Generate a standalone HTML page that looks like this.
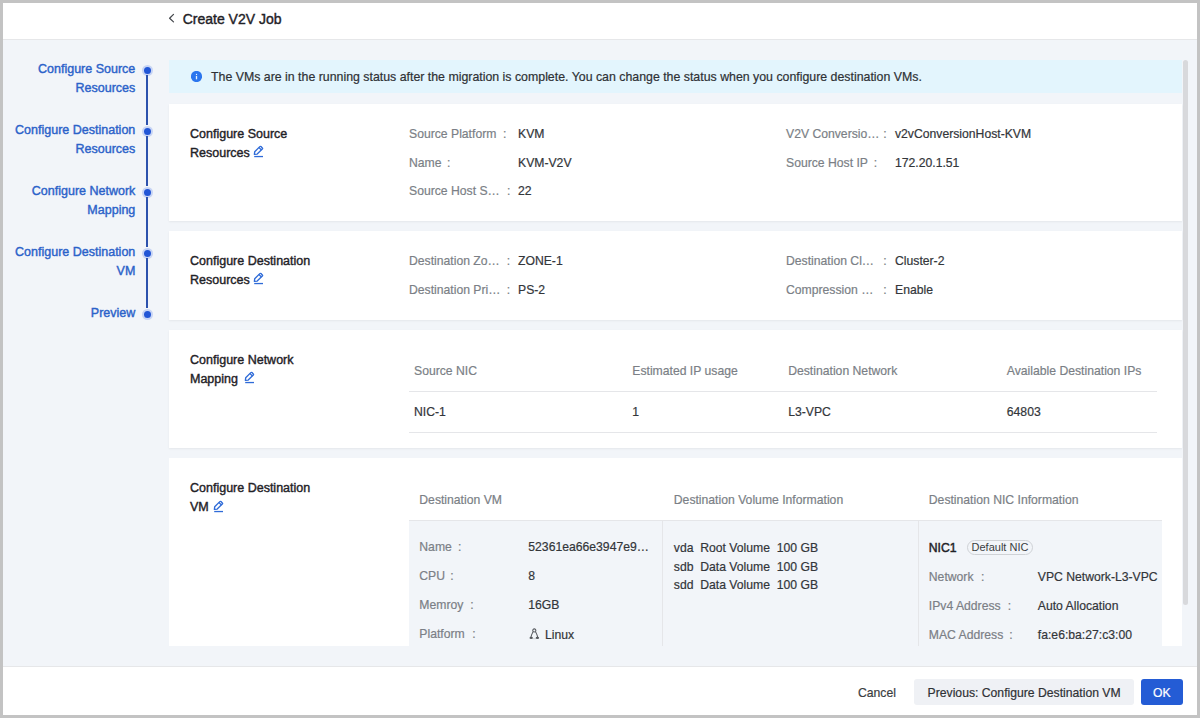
<!DOCTYPE html>
<html><head><meta charset="utf-8"><title>Create V2V Job</title>
<style>
*{box-sizing:border-box;margin:0;padding:0}
html,body{width:1200px;height:718px;overflow:hidden;background:#c3c3c3}
body{font-family:"Liberation Sans",sans-serif;position:relative}
.t{position:absolute;white-space:nowrap;-webkit-text-stroke:0.2px currentColor}
.r{position:absolute}
</style></head><body>
<div class="r" style="left:3px;top:3px;width:1194px;height:712px;background:#fff;"></div>
<div class="r" style="left:3px;top:40px;width:1194px;height:626px;background:#f2f5f9;"></div>
<div class="r" style="left:3px;top:39px;width:1194px;height:1px;background:#e6e7e9;"></div>
<div class="r" style="left:3px;top:666px;width:1194px;height:1px;background:#e6e7e9;"></div>
<svg class="r" style="left:166px;top:11px" width="12" height="14" viewBox="0 0 12 14"><path d="M7.5 3.4 L3.6 7.2 L7.5 10.9" fill="none" stroke="#45484d" stroke-width="1.25" stroke-linecap="round" stroke-linejoin="round"/></svg>
<div class="t" style="left:182.70px;top:10.65px;font-size:14px;line-height:16.8px;font-weight:400;color:#1f2227;-webkit-text-stroke:0.4px #1f2227">Create V2V Job</div>
<div class="t" style="right:1064.70px;text-align:right;top:62.17px;font-size:12.5px;line-height:15.0px;font-weight:400;color:#2b62c9;-webkit-text-stroke:0.4px #2b62c9">Configure Source</div>
<div class="t" style="right:1064.70px;text-align:right;top:81.07px;font-size:12.5px;line-height:15.0px;font-weight:400;color:#2b62c9;-webkit-text-stroke:0.4px #2b62c9">Resources</div>
<div class="r" style="left:141.75px;top:64.50px;width:11px;height:11px;border-radius:50%;background:#2256d6;border:2px solid rgba(255,255,255,0.75)"></div>
<div class="r" style="left:146px;top:75px;width:2px;height:50px;background:#2d52ad;"></div>
<div class="t" style="right:1064.70px;text-align:right;top:123.17px;font-size:12.5px;line-height:15.0px;font-weight:400;color:#2b62c9;-webkit-text-stroke:0.4px #2b62c9">Configure Destination</div>
<div class="t" style="right:1064.70px;text-align:right;top:142.07px;font-size:12.5px;line-height:15.0px;font-weight:400;color:#2b62c9;-webkit-text-stroke:0.4px #2b62c9">Resources</div>
<div class="r" style="left:141.75px;top:125.50px;width:11px;height:11px;border-radius:50%;background:#2256d6;border:2px solid rgba(255,255,255,0.75)"></div>
<div class="r" style="left:146px;top:136px;width:2px;height:50px;background:#2d52ad;"></div>
<div class="t" style="right:1064.70px;text-align:right;top:184.17px;font-size:12.5px;line-height:15.0px;font-weight:400;color:#2b62c9;-webkit-text-stroke:0.4px #2b62c9">Configure Network</div>
<div class="t" style="right:1064.70px;text-align:right;top:203.07px;font-size:12.5px;line-height:15.0px;font-weight:400;color:#2b62c9;-webkit-text-stroke:0.4px #2b62c9">Mapping</div>
<div class="r" style="left:141.75px;top:186.50px;width:11px;height:11px;border-radius:50%;background:#2256d6;border:2px solid rgba(255,255,255,0.75)"></div>
<div class="r" style="left:146px;top:197px;width:2px;height:50px;background:#2d52ad;"></div>
<div class="t" style="right:1064.70px;text-align:right;top:245.17px;font-size:12.5px;line-height:15.0px;font-weight:400;color:#2b62c9;-webkit-text-stroke:0.4px #2b62c9">Configure Destination</div>
<div class="t" style="right:1064.70px;text-align:right;top:264.07px;font-size:12.5px;line-height:15.0px;font-weight:400;color:#2b62c9;-webkit-text-stroke:0.4px #2b62c9">VM</div>
<div class="r" style="left:141.75px;top:247.50px;width:11px;height:11px;border-radius:50%;background:#2256d6;border:2px solid rgba(255,255,255,0.75)"></div>
<div class="r" style="left:146px;top:258px;width:2px;height:50px;background:#2d52ad;"></div>
<div class="t" style="right:1064.70px;text-align:right;top:306.17px;font-size:12.5px;line-height:15.0px;font-weight:400;color:#2b62c9;-webkit-text-stroke:0.4px #2b62c9">Preview</div>
<div class="r" style="left:141.75px;top:308.50px;width:11px;height:11px;border-radius:50%;background:#2256d6;border:2px solid rgba(255,255,255,0.75)"></div>
<div class="r" style="left:169px;top:60px;width:1013px;height:33px;background:#e3f5fd;"></div>
<svg class="r" style="left:190.9px;top:71.1px" width="11" height="11" viewBox="0 0 11 11"><circle cx="5.5" cy="5.5" r="5.6" fill="#2b76ee"/><rect x="4.85" y="4.9" width="1.3" height="3.4" fill="#e8f4ff"/><circle cx="5.5" cy="3.4" r="0.7" fill="#e8f4ff"/></svg>
<div class="t" style="left:211.00px;top:70.31px;font-size:12.35px;line-height:14.82px;font-weight:400;color:#2e3135;">The VMs are in the running status after the migration is complete. You can change the status when you configure destination VMs.</div>
<div class="r" style="left:1183px;top:60px;width:5px;height:545px;background:#d8d9dc;border-radius:3px"></div>
<div class="r" style="left:169px;top:104px;width:1013px;height:117px;background:#fff;box-shadow:0 1px 2px rgba(0,0,0,0.06)"></div>
<div class="t" style="left:190.00px;top:126.87px;font-size:12.5px;line-height:15.0px;font-weight:400;color:#1f2227;-webkit-text-stroke:0.4px #1f2227">Configure Source</div>
<div class="t" style="left:190.00px;top:145.57px;font-size:12.5px;line-height:15.0px;font-weight:400;color:#1f2227;-webkit-text-stroke:0.4px #1f2227">Resources</div>
<svg class="r" style="left:253px;top:145.3px" width="11" height="13" viewBox="0 0 11 13"><path d="M1.4 9.4 L1.7 6.8 L6.8 1.6 Q7.4 1.0 8.0 1.6 L9.3 2.9 Q9.9 3.5 9.3 4.1 L4.2 9.1 Z" fill="none" stroke="#2f6bd8" stroke-width="1.35" stroke-linejoin="round"/><path d="M5.9 2.5 L8.4 5.0" stroke="#2f6bd8" stroke-width="1.1"/><rect x="1.2" y="10.9" width="8.8" height="1.3" fill="#2f6bd8"/></svg>
<div class="t" style="left:409.00px;top:126.95px;font-size:12.2px;line-height:14.64px;font-weight:400;color:#7b7f86;">Source Platform</div>
<div class="t" style="left:503.00px;top:126.95px;font-size:12.2px;line-height:14.64px;font-weight:400;color:#7b7f86;">:</div>
<div class="t" style="left:518.00px;top:126.95px;font-size:12.2px;line-height:14.64px;font-weight:400;color:#33363a;">KVM</div>
<div class="t" style="left:409.00px;top:155.75px;font-size:12.2px;line-height:14.64px;font-weight:400;color:#7b7f86;">Name</div>
<div class="t" style="left:447.10px;top:155.75px;font-size:12.2px;line-height:14.64px;font-weight:400;color:#7b7f86;">:</div>
<div class="t" style="left:518.00px;top:155.75px;font-size:12.2px;line-height:14.64px;font-weight:400;color:#33363a;">KVM-V2V</div>
<div class="t" style="left:409.00px;top:184.45px;font-size:12.2px;line-height:14.64px;font-weight:400;color:#7b7f86;">Source Host S…</div>
<div class="t" style="left:506.90px;top:184.45px;font-size:12.2px;line-height:14.64px;font-weight:400;color:#7b7f86;">:</div>
<div class="t" style="left:518.00px;top:184.45px;font-size:12.2px;line-height:14.64px;font-weight:400;color:#33363a;">22</div>
<div class="t" style="left:786.00px;top:126.95px;font-size:12.2px;line-height:14.64px;font-weight:400;color:#7b7f86;">V2V Conversio…</div>
<div class="t" style="left:883.30px;top:126.95px;font-size:12.2px;line-height:14.64px;font-weight:400;color:#7b7f86;">:</div>
<div class="t" style="left:895.00px;top:126.95px;font-size:12.2px;line-height:14.64px;font-weight:400;color:#33363a;">v2vConversionHost-KVM</div>
<div class="t" style="left:786.00px;top:155.75px;font-size:12.2px;line-height:14.64px;font-weight:400;color:#7b7f86;">Source Host IP</div>
<div class="t" style="left:873.80px;top:155.75px;font-size:12.2px;line-height:14.64px;font-weight:400;color:#7b7f86;">:</div>
<div class="t" style="left:895.00px;top:155.75px;font-size:12.2px;line-height:14.64px;font-weight:400;color:#33363a;">172.20.1.51</div>
<div class="r" style="left:169px;top:231px;width:1013px;height:89px;background:#fff;box-shadow:0 1px 2px rgba(0,0,0,0.06)"></div>
<div class="t" style="left:190.00px;top:253.87px;font-size:12.5px;line-height:15.0px;font-weight:400;color:#1f2227;-webkit-text-stroke:0.4px #1f2227">Configure Destination</div>
<div class="t" style="left:190.00px;top:272.57px;font-size:12.5px;line-height:15.0px;font-weight:400;color:#1f2227;-webkit-text-stroke:0.4px #1f2227">Resources</div>
<svg class="r" style="left:253px;top:272.3px" width="11" height="13" viewBox="0 0 11 13"><path d="M1.4 9.4 L1.7 6.8 L6.8 1.6 Q7.4 1.0 8.0 1.6 L9.3 2.9 Q9.9 3.5 9.3 4.1 L4.2 9.1 Z" fill="none" stroke="#2f6bd8" stroke-width="1.35" stroke-linejoin="round"/><path d="M5.9 2.5 L8.4 5.0" stroke="#2f6bd8" stroke-width="1.1"/><rect x="1.2" y="10.9" width="8.8" height="1.3" fill="#2f6bd8"/></svg>
<div class="t" style="left:409.00px;top:254.25px;font-size:12.2px;line-height:14.64px;font-weight:400;color:#7b7f86;">Destination Zo…</div>
<div class="t" style="left:506.70px;top:254.25px;font-size:12.2px;line-height:14.64px;font-weight:400;color:#7b7f86;">:</div>
<div class="t" style="left:518.00px;top:254.25px;font-size:12.2px;line-height:14.64px;font-weight:400;color:#33363a;">ZONE-1</div>
<div class="t" style="left:409.00px;top:283.05px;font-size:12.2px;line-height:14.64px;font-weight:400;color:#7b7f86;">Destination Pri…</div>
<div class="t" style="left:506.70px;top:283.05px;font-size:12.2px;line-height:14.64px;font-weight:400;color:#7b7f86;">:</div>
<div class="t" style="left:518.00px;top:283.05px;font-size:12.2px;line-height:14.64px;font-weight:400;color:#33363a;">PS-2</div>
<div class="t" style="left:786.00px;top:254.25px;font-size:12.2px;line-height:14.64px;font-weight:400;color:#7b7f86;">Destination Cl…</div>
<div class="t" style="left:883.30px;top:254.25px;font-size:12.2px;line-height:14.64px;font-weight:400;color:#7b7f86;">:</div>
<div class="t" style="left:895.00px;top:254.25px;font-size:12.2px;line-height:14.64px;font-weight:400;color:#33363a;">Cluster-2</div>
<div class="t" style="left:786.00px;top:283.05px;font-size:12.2px;line-height:14.64px;font-weight:400;color:#7b7f86;">Compression …</div>
<div class="t" style="left:883.30px;top:283.05px;font-size:12.2px;line-height:14.64px;font-weight:400;color:#7b7f86;">:</div>
<div class="t" style="left:895.00px;top:283.05px;font-size:12.2px;line-height:14.64px;font-weight:400;color:#33363a;">Enable</div>
<div class="r" style="left:169px;top:330px;width:1013px;height:118px;background:#fff;box-shadow:0 1px 2px rgba(0,0,0,0.06)"></div>
<div class="t" style="left:190.00px;top:352.87px;font-size:12.5px;line-height:15.0px;font-weight:400;color:#1f2227;-webkit-text-stroke:0.4px #1f2227">Configure Network</div>
<div class="t" style="left:190.00px;top:371.57px;font-size:12.5px;line-height:15.0px;font-weight:400;color:#1f2227;-webkit-text-stroke:0.4px #1f2227">Mapping</div>
<svg class="r" style="left:243.6px;top:371.3px" width="11" height="13" viewBox="0 0 11 13"><path d="M1.4 9.4 L1.7 6.8 L6.8 1.6 Q7.4 1.0 8.0 1.6 L9.3 2.9 Q9.9 3.5 9.3 4.1 L4.2 9.1 Z" fill="none" stroke="#2f6bd8" stroke-width="1.35" stroke-linejoin="round"/><path d="M5.9 2.5 L8.4 5.0" stroke="#2f6bd8" stroke-width="1.1"/><rect x="1.2" y="10.9" width="8.8" height="1.3" fill="#2f6bd8"/></svg>
<div class="r" style="left:409px;top:391px;width:748px;height:1px;background:#e5e6e9;"></div>
<div class="r" style="left:409px;top:432px;width:748px;height:1px;background:#e5e6e9;"></div>
<div class="t" style="left:414.00px;top:363.95px;font-size:12.2px;line-height:14.64px;font-weight:400;color:#7b7f86;">Source NIC</div>
<div class="t" style="left:414.00px;top:405.45px;font-size:12.2px;line-height:14.64px;font-weight:400;color:#33363a;">NIC-1</div>
<div class="t" style="left:632.30px;top:363.95px;font-size:12.2px;line-height:14.64px;font-weight:400;color:#7b7f86;">Estimated IP usage</div>
<div class="t" style="left:632.30px;top:405.45px;font-size:12.2px;line-height:14.64px;font-weight:400;color:#33363a;">1</div>
<div class="t" style="left:788.20px;top:363.95px;font-size:12.2px;line-height:14.64px;font-weight:400;color:#7b7f86;">Destination Network</div>
<div class="t" style="left:788.20px;top:405.45px;font-size:12.2px;line-height:14.64px;font-weight:400;color:#33363a;">L3-VPC</div>
<div class="t" style="left:1006.80px;top:363.95px;font-size:12.2px;line-height:14.64px;font-weight:400;color:#7b7f86;">Available Destination IPs</div>
<div class="t" style="left:1006.80px;top:405.45px;font-size:12.2px;line-height:14.64px;font-weight:400;color:#33363a;">64803</div>
<div class="r" style="left:169px;top:458px;width:1013px;height:187.5px;overflow:hidden;background:#fff">
</div>
<div class="t" style="left:190.00px;top:480.87px;font-size:12.5px;line-height:15.0px;font-weight:400;color:#1f2227;-webkit-text-stroke:0.4px #1f2227">Configure Destination</div>
<div class="t" style="left:190.00px;top:499.57px;font-size:12.5px;line-height:15.0px;font-weight:400;color:#1f2227;-webkit-text-stroke:0.4px #1f2227">VM</div>
<svg class="r" style="left:213px;top:499.5px" width="11" height="13" viewBox="0 0 11 13"><path d="M1.4 9.4 L1.7 6.8 L6.8 1.6 Q7.4 1.0 8.0 1.6 L9.3 2.9 Q9.9 3.5 9.3 4.1 L4.2 9.1 Z" fill="none" stroke="#2f6bd8" stroke-width="1.35" stroke-linejoin="round"/><path d="M5.9 2.5 L8.4 5.0" stroke="#2f6bd8" stroke-width="1.1"/><rect x="1.2" y="10.9" width="8.8" height="1.3" fill="#2f6bd8"/></svg>
<div class="r" style="left:409px;top:520px;width:753px;height:1px;background:#e5e6e9;"></div>
<div class="r" style="left:409px;top:521px;width:753px;height:124.5px;background:#f2f5f9;"></div>
<div class="r" style="left:662px;top:521px;width:1px;height:124.5px;background:#e5e6e9;"></div>
<div class="r" style="left:918px;top:521px;width:1px;height:124.5px;background:#e5e6e9;"></div>
<div class="t" style="left:419.30px;top:493.25px;font-size:12.2px;line-height:14.64px;font-weight:400;color:#7b7f86;">Destination VM</div>
<div class="t" style="left:673.80px;top:493.25px;font-size:12.2px;line-height:14.64px;font-weight:400;color:#7b7f86;">Destination Volume Information</div>
<div class="t" style="left:928.80px;top:493.25px;font-size:12.2px;line-height:14.64px;font-weight:400;color:#7b7f86;">Destination NIC Information</div>
<div class="t" style="left:419.30px;top:540.45px;font-size:12.2px;line-height:14.64px;font-weight:400;color:#7b7f86;">Name</div>
<div class="t" style="left:457.90px;top:540.45px;font-size:12.2px;line-height:14.64px;font-weight:400;color:#7b7f86;">:</div>
<div class="t" style="left:528.30px;top:540.45px;font-size:12.2px;line-height:14.64px;font-weight:400;color:#33363a;">52361ea66e3947e9…</div>
<div class="t" style="left:419.30px;top:569.45px;font-size:12.2px;line-height:14.64px;font-weight:400;color:#7b7f86;">CPU</div>
<div class="t" style="left:450.20px;top:569.45px;font-size:12.2px;line-height:14.64px;font-weight:400;color:#7b7f86;">:</div>
<div class="t" style="left:528.30px;top:569.45px;font-size:12.2px;line-height:14.64px;font-weight:400;color:#33363a;">8</div>
<div class="t" style="left:419.30px;top:598.45px;font-size:12.2px;line-height:14.64px;font-weight:400;color:#7b7f86;">Memroy</div>
<div class="t" style="left:470.20px;top:598.45px;font-size:12.2px;line-height:14.64px;font-weight:400;color:#7b7f86;">:</div>
<div class="t" style="left:528.30px;top:598.45px;font-size:12.2px;line-height:14.64px;font-weight:400;color:#33363a;">16GB</div>
<div class="t" style="left:419.30px;top:627.45px;font-size:12.2px;line-height:14.64px;font-weight:400;color:#7b7f86;">Platform</div>
<div class="t" style="left:472.20px;top:627.45px;font-size:12.2px;line-height:14.64px;font-weight:400;color:#7b7f86;">:</div>
<div class="t" style="left:528.30px;top:627.45px;font-size:12.2px;line-height:14.64px;font-weight:400;color:#33363a;"></div>
<div class="t" style="left:673.80px;top:540.95px;font-size:12.2px;line-height:14.64px;font-weight:400;color:#33363a;">vda&nbsp; Root Volume&nbsp; 100 GB</div>
<div class="t" style="left:673.80px;top:559.70px;font-size:12.2px;line-height:14.64px;font-weight:400;color:#33363a;">sdb&nbsp; Data Volume&nbsp; 100 GB</div>
<div class="t" style="left:673.80px;top:578.45px;font-size:12.2px;line-height:14.64px;font-weight:400;color:#33363a;">sdd&nbsp; Data Volume&nbsp; 100 GB</div>
<svg class="r" style="left:529px;top:628px" width="11" height="12" viewBox="0 0 11 12"><circle cx="5.3" cy="2.4" r="1.55" fill="none" stroke="#55585d" stroke-width="1.05"/><path d="M4.1 3.6 C3.6 5 2.2 6.8 1.9 9.2 M6.5 3.6 C7 5 8.4 6.8 8.7 9.2" fill="none" stroke="#55585d" stroke-width="1.05"/><path d="M3.6 10.7 L7 10.7" stroke="#c4c6ca" stroke-width="0.8"/><ellipse cx="2.2" cy="9.9" rx="1.7" ry="1.15" fill="#55585d"/><ellipse cx="8.4" cy="9.9" rx="1.7" ry="1.15" fill="#55585d"/></svg>
<div class="t" style="left:545.00px;top:627.75px;font-size:12.2px;line-height:14.64px;font-weight:400;color:#33363a;">Linux</div>
<div class="t" style="left:928.80px;top:540.95px;font-size:12.2px;line-height:14.64px;font-weight:400;color:#1f2227;-webkit-text-stroke:0.45px #1f2227">NIC1</div>
<div class="r" style="left:967px;top:540px;width:66px;height:15px;border:1px solid #cfd2d6;border-radius:8px;font-size:11px;line-height:13px;text-align:center;color:#3a3d41">Default NIC</div>
<div class="t" style="left:928.80px;top:569.75px;font-size:12.2px;line-height:14.64px;font-weight:400;color:#7b7f86;">Network</div>
<div class="t" style="left:981.00px;top:569.75px;font-size:12.2px;line-height:14.64px;font-weight:400;color:#7b7f86;">:</div>
<div class="t" style="left:1037.80px;top:569.75px;font-size:12.2px;line-height:14.64px;font-weight:400;color:#33363a;">VPC Network-L3-VPC</div>
<div class="t" style="left:928.80px;top:598.75px;font-size:12.2px;line-height:14.64px;font-weight:400;color:#7b7f86;">IPv4 Address</div>
<div class="t" style="left:1007.80px;top:598.75px;font-size:12.2px;line-height:14.64px;font-weight:400;color:#7b7f86;">:</div>
<div class="t" style="left:1037.80px;top:598.75px;font-size:12.2px;line-height:14.64px;font-weight:400;color:#33363a;">Auto Allocation</div>
<div class="t" style="left:928.80px;top:627.75px;font-size:12.2px;line-height:14.64px;font-weight:400;color:#7b7f86;">MAC Address</div>
<div class="t" style="left:1009.30px;top:627.75px;font-size:12.2px;line-height:14.64px;font-weight:400;color:#7b7f86;">:</div>
<div class="t" style="left:1037.80px;top:627.75px;font-size:12.2px;line-height:14.64px;font-weight:400;color:#33363a;">fa:e6:ba:27:c3:00</div>
<div class="t" style="left:858.00px;top:686.25px;font-size:12.2px;line-height:14.64px;font-weight:400;color:#3a3d41;">Cancel</div>
<div class="r" style="left:914px;top:679px;width:220px;height:26px;background:#eff1f5;border-radius:3px"></div>
<div class="t" style="left:927.60px;top:686.25px;font-size:12.2px;line-height:14.64px;font-weight:400;color:#2f3236;">Previous: Configure Destination VM</div>
<div class="r" style="left:1141px;top:679px;width:42px;height:26px;background:#245cd5;border-radius:3px"></div>
<div class="t" style="left:1153.00px;top:686.25px;font-size:12.2px;line-height:14.64px;font-weight:400;color:#fff;">OK</div>
</body></html>
